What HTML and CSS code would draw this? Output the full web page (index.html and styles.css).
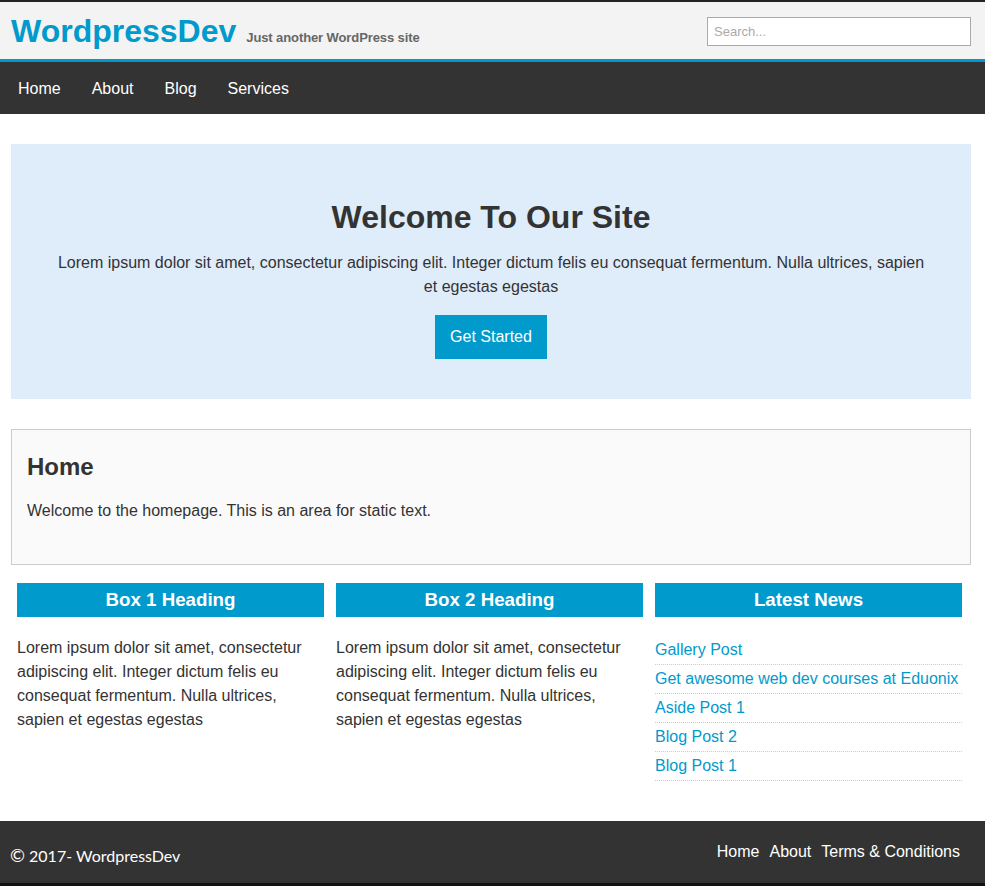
FILE: index.html
```html
<!DOCTYPE html>
<html lang="en">
<head>
<meta charset="utf-8">
<title>WordpressDev</title>
<link rel="stylesheet" href="styles.css">
</head>
<body>
<header class="site-header">
  <div class="container header-inner">
    <div class="branding">
      <a class="logo" href="#">WordpressDev</a>
      <span class="tagline">Just another WordPress site</span>
    </div>
    <input class="search" type="text" placeholder="Search...">
  </div>
</header>
<nav class="main-nav">
  <div class="container">
    <ul class="nav-list">
      <li><a href="#">Home</a></li>
      <li><a href="#">About</a></li>
      <li><a href="#">Blog</a></li>
      <li><a href="#">Services</a></li>
    </ul>
  </div>
</nav>
<div class="container">
  <section class="showcase">
    <h1>Welcome To Our Site</h1>
    <p>Lorem ipsum dolor sit amet, consectetur adipiscing elit. Integer dictum felis eu consequat fermentum. Nulla ultrices, sapien et egestas egestas</p>
    <a class="btn" href="#">Get Started</a>
  </section>
  <section class="main-box">
    <h2>Home</h2>
    <p>Welcome to the homepage. This is an area for static text.</p>
  </section>
  <div class="boxes">
    <div class="box">
      <h3>Box 1 Heading</h3>
      <p>Lorem ipsum dolor sit amet, consectetur adipiscing elit. Integer dictum felis eu consequat fermentum. Nulla ultrices, sapien et egestas egestas</p>
    </div>
    <div class="box">
      <h3>Box 2 Heading</h3>
      <p>Lorem ipsum dolor sit amet, consectetur adipiscing elit. Integer dictum felis eu consequat fermentum. Nulla ultrices, sapien et egestas egestas</p>
    </div>
    <div class="box">
      <h3>Latest News</h3>
      <ul class="news">
        <li><a href="#">Gallery Post</a></li>
        <li><a href="#">Get awesome web dev courses at Eduonix</a></li>
        <li><a href="#">Aside Post 1</a></li>
        <li><a href="#">Blog Post 2</a></li>
        <li><a href="#">Blog Post 1</a></li>
      </ul>
    </div>
  </div>
</div>
<footer class="site-footer">
  <div class="container footer-inner">
    <p class="copy"><span class="copy-sign">&copy;</span> 2017- WordpressDev</p>
    <ul class="footer-nav">
      <li><a href="#">Home</a></li>
      <li><a href="#">About</a></li>
      <li><a href="#">Terms &amp; Conditions</a></li>
    </ul>
  </div>
</footer>
</body>
</html>
```
FILE: styles.css
```css
* { box-sizing: border-box; }
html, body { margin: 0; padding: 0; }
body {
  font-family: "Liberation Sans", Arial, sans-serif;
  font-size: 16px;
  color: #333;
  background: #fff;
  border-top: 2px solid #222;
  border-bottom: 3px solid #111;
}
a { text-decoration: none; }
ul { list-style: none; margin: 0; padding: 0; }

.container {
  width: 960px;
  margin: 0 14px 0 11px;
}

.site-header {
  background: #f3f3f3;
  border-bottom: 3px solid #009acd;
}
.header-inner {
  height: 57px;
  display: flex;
  align-items: center;
  justify-content: space-between;
}
.branding {
  display: flex;
  align-items: baseline;
  gap: 10px;
  padding-top: 2px;
}
.logo {
  color: #009acd;
  font-size: 32px;
  font-weight: bold;
}
.tagline {
  color: #666;
  font-size: 13px;
  font-weight: bold;
  letter-spacing: -0.1px;
}
.search {
  width: 264px;
  height: 29px;
  border: 1px solid #aaa;
  background: #fff;
  padding: 0 6px;
  font-family: "Liberation Sans", Arial, sans-serif;
  font-size: 13px;
  color: #333;
  margin-top: 2px;
}
.search::placeholder { color: #aaa; }

.main-nav {
  background: #333;
  height: 52px;
  padding-top: 1px;
}
.nav-list {
  display: flex;
  gap: 31px;
  padding-left: 7px;
}
.nav-list a {
  display: block;
  color: #fff;
  line-height: 51px;
}

.showcase {
  margin-top: 30px;
  background: #dfecfa;
  text-align: center;
  padding: 55px 40px 40px;
}
.showcase h1 {
  margin: 0 0 16px;
  font-size: 32px;
  line-height: 36px;
  color: #333;
}
.showcase p {
  margin: 0 0 16px;
  line-height: 24px;
}
.btn {
  display: inline-block;
  background: #009acd;
  color: #fff;
  padding: 12px 15px;
  line-height: 20px;
}

.main-box {
  margin-top: 30px;
  border: 1px solid #ccc;
  background: #fafafa;
  padding: 15px;
}
.main-box h2 {
  margin: 8px 0 18px;
  font-size: 24px;
  line-height: 28px;
}
.main-box p {
  margin: 0 0 26px;
  line-height: 24px;
}

.boxes {
  display: grid;
  grid-template-columns: repeat(3, 307px);
  gap: 12px;
  padding-left: 6px;
  margin-top: 18px;
  margin-bottom: 40px;
}
.box h3 {
  margin: 0;
  background: #009acd;
  color: #fff;
  text-align: center;
  font-size: 18.72px;
  line-height: 22px;
  padding: 6px 0;
}
.box p {
  margin: 19px 0 0;
  line-height: 24px;
}
.news {
  margin-top: 19px;
}
.news li {
  border-bottom: 1px dotted #ccc;
  padding: 5px 0;
  line-height: 18px;
}
.news a {
  color: #009acd;
}

.site-footer {
  background: #333;
  height: 62px;
}
.footer-inner {
  display: flex;
  justify-content: space-between;
  align-items: flex-start;
}
.copy {
  margin: 0 0 0 -1px;
  padding-top: 25px;
  font-family: Lato, "Liberation Sans", sans-serif;
  font-size: 16px;
  line-height: 18px;
  color: #fff;
}
.copy-sign {
  font-size: 18px;
}
.footer-nav {
  display: flex;
  gap: 10px;
  padding-top: 22px;
  padding-right: 11px;
}
.footer-nav a {
  color: #fff;
  line-height: 18px;
}
```
